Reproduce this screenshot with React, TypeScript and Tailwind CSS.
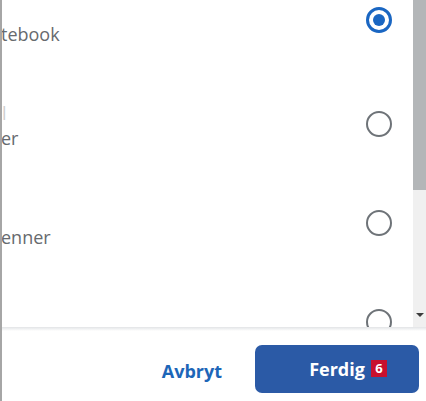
import React from 'react'

const rows = [
  { line1: '', line2: 'tebook', checked: true, h: 'h-[102px]' },
  { line1: 'l', line2: 'er', checked: false, h: 'h-[106px]' },
  { line1: '', line2: 'enner', checked: false, h: 'h-[92px]' },
  { line1: '', line2: '', checked: false, h: 'h-[106px]' },
]

function Radio({ checked }: { checked: boolean }) {
  if (checked) {
    return (
      <span className="flex h-[26px] w-[26px] items-center justify-center rounded-full border-[3px] border-[#1a66c2]">
        <span className="h-[12px] w-[12px] rounded-full bg-[#1a66c2]" />
      </span>
    )
  }
  return <span className="block h-[26px] w-[26px] rounded-full border-2 border-[#6e7378]" />
}

export default function App() {
  return (
    <div className="flex h-[401px] w-[426px] flex-col overflow-hidden border-l-2 border-[#a6a6a6] bg-white font-['Open_Sans','Noto_Sans',sans-serif]">
      <div className="flex h-[327px] shrink-0">
        <div className="flex-1 overflow-hidden">
          <div className="-mt-[31px] flex flex-col">
            {rows.map((r, i) => (
              <div key={i} className={`flex ${r.h} shrink-0 items-center justify-between pr-[21px]`}>
                <div className="flex flex-col pt-[3px] text-[18px] leading-[25px] text-[#666a6e]">
                  <span className="h-[25px] text-[#d0d0d0]">{r.line1}</span>
                  <span className="-ml-[1px] h-[25px]">{r.line2}</span>
                </div>
                <Radio checked={r.checked} />
              </div>
            ))}
          </div>
        </div>
        <div className="flex w-[13px] flex-col bg-[#f0f0f0]">
          <div className="h-[190px] bg-[#b3b6b8]" />
          <div className="flex-1" />
          <div className="flex h-[14px] items-start justify-center">
            <span className="h-0 w-0 border-x-[4px] border-t-[4px] border-x-transparent border-t-[#3c3c3c]" />
          </div>
        </div>
      </div>
      <div className="h-[4px] shrink-0 bg-gradient-to-b from-[#e2e4e6] to-white" />
      <div className="flex flex-1 items-start justify-end gap-[33px] pr-[7px] pt-[14px]">
        <button className="mt-[13px] text-[18px] font-bold text-[#1d66b8]">Avbryt</button>
        <button className="relative flex h-[48px] w-[164px] items-center justify-center rounded-[7px] bg-[#2b5aa6] text-[18px] font-bold text-white">
          Ferdig
          <span className="absolute left-[116px] top-[15px] flex h-[17px] w-[16px] items-center justify-center bg-[#c8102e] text-[13px] leading-none text-white">
            6
          </span>
        </button>
      </div>
    </div>
  )
}
